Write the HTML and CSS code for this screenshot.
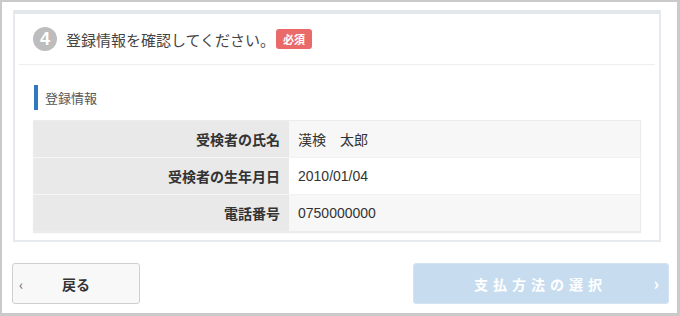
FILE: index.html
```html
<!DOCTYPE html>
<html lang="ja">
<head>
<meta charset="utf-8">
<link rel="stylesheet" href="styles.css">
</head>
<body>
<div class="frame">
  <section class="card">
    <header class="card-head">
      <span class="step">4</span>
      <h2 class="title">登録情報を確認してください。</h2>
      <span class="badge">必須</span>
    </header>
    <div class="card-body">
      <h3 class="sub">登録情報</h3>
      <table class="info">
        <tr class="odd"><th>受検者の氏名</th><td>漢検　太郎</td></tr>
        <tr><th>受検者の生年月日</th><td>2010/01/04</td></tr>
        <tr class="odd"><th>電話番号</th><td>0750000000</td></tr>
      </table>
    </div>
  </section>
  <div class="actions">
    <button class="btn btn-back"><span class="chev-l">‹</span>戻る</button>
    <button class="btn btn-next">支払方法の選択<span class="chev-r">›</span></button>
  </div>
</div>
</body>
</html>
```

FILE: styles.css
```css
html, body {
  margin: 0;
  padding: 0;
  background: #fff;
}
body {
  font-family: "Liberation Sans", "Noto Sans CJK JP", sans-serif;
  color: #333;
}
.frame {
  box-sizing: border-box;
  width: 680px;
  height: 316px;
  border-style: solid;
  border-color: #cacaca;
  border-width: 2px 3px 3px 2px;
  padding: 8px 8px 0 10px;
}
.card {
  margin: 0 8px 0 1px;
  border: 2px solid #e6eaef;
  border-top: 4px solid #e2e7ec;
  padding: 0 0 8px;
  background: #fff;
}
.card-head {
  display: flex;
  align-items: center;
  height: 50px;
  margin: 0 4px;
  padding-left: 14px;
  border-bottom: 1px solid #eeeeee;
}
.step {
  display: inline-flex;
  align-items: center;
  justify-content: center;
  width: 24px;
  height: 24px;
  border-radius: 50%;
  background: #bdbdbd;
  color: #fff;
  font-weight: bold;
  font-size: 18px;
  font-family: "Liberation Sans", sans-serif;
}
.title {
  margin: 0 0 0 9px;
  font-weight: normal;
  font-size: 15px;
  color: #444;
  font-family: "Noto Sans CJK JP", sans-serif;
}
.badge {
  display: inline-flex;
  align-items: center;
  justify-content: center;
  width: 36px;
  height: 20px;
  margin-left: 1px;
  border-radius: 3px;
  background: #ea6a6a;
  color: #fff;
  font-size: 11px;
  font-weight: bold;
  font-family: "Noto Sans CJK JP", sans-serif;
}
.card-body {
  padding: 20px 18px 0;
}
.sub {
  margin: 0 0 10px 1px;
  height: 25px;
  line-height: 25px;
  border-left: 4px solid #2f79bf;
  padding-left: 7px;
  font-size: 13px;
  font-weight: normal;
  color: #555;
  font-family: "Noto Sans CJK JP", sans-serif;
}
.info {
  width: 100%;
  border-collapse: collapse;
  border: 1px solid #ececec;
  box-shadow: 0 1px 1px rgba(0, 0, 0, 0.08);
  font-size: 14px;
}
.info tr + tr th,
.info tr + tr td {
  border-top: 1px solid #f3f3f3;
}
.info th {
  width: 246px;
  height: 36px;
  padding: 0 9px 0 0;
  text-align: right;
  background: #e9e9e9;
  font-weight: bold;
  color: #333;
  font-family: "Liberation Sans", "Noto Sans CJK JP", sans-serif;
}
.info tr + tr th {
  border-top-color: #f6f6f6;
}
.info td {
  padding: 0 9px;
  background: #fff;
  color: #333;
}
.info tr.odd td {
  background: #f7f7f7;
}
.actions {
  display: flex;
  justify-content: space-between;
  margin-top: 21px;
}
.btn {
  position: relative;
  box-sizing: border-box;
  height: 41px;
  border-radius: 3px;
  font-size: 14px;
  font-weight: bold;
  font-family: "Noto Sans CJK JP", sans-serif;
  cursor: pointer;
}
.btn-back {
  width: 128px;
  border: 1px solid #cfcfcf;
  background: #f8f8f8;
  color: #333;
}
.chev-l {
  position: absolute;
  left: 6px;
  top: 10px;
  font-weight: normal;
  font-size: 14px;
  color: #666;
}
.btn-next {
  width: 256px;
  border: 1px solid #d3e3f1;
  background: #c7ddef;
  color: #fff;
  letter-spacing: 5px;
  padding-left: 5px;
}
.chev-r {
  position: absolute;
  right: 9px;
  top: 6px;
  letter-spacing: 0;
  font-size: 17px;
}
```
